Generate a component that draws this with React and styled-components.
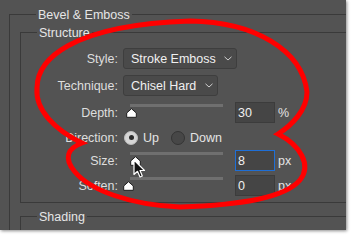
import styled, { createGlobalStyle } from 'styled-components';

const GlobalStyle = createGlobalStyle`
  body {
    margin: 0;
    font-family: "Liberation Sans", Arial, sans-serif;
  }
`;

const Page = styled.div`
  position: relative;
  width: 355px;
  height: 240px;
  background: #ffffff;
  overflow: hidden;
`;

const Dialog = styled.div`
  width: 346px;
  height: 230px;
  box-sizing: border-box;
  padding: 6px 0 0 9px;
  background: #535353;
  box-shadow: 1px 1px 3px rgba(0, 0, 0, 0.45);
  overflow: hidden;
  color: #e4e4e4;
  font-size: 12.5px;
`;

const Group = styled.fieldset`
  margin: 0 0 ${({ $mb }) => $mb || 0}px 0;
  padding: ${({ $pad }) => $pad};
  width: 380px;
  min-width: 0;
  box-sizing: border-box;
  border: 1px solid #3a3a3a;
`;

// text sits a pixel under the group line, as in Photoshop
const Legend = styled.legend`
  margin-left: ${({ $ml }) => $ml}px;
  padding: 2px 2px 0;
  font-size: 12.5px;
  line-height: 14px;
  color: #e6e6e6;
`;

const Row = styled.div`
  display: flex;
  align-items: center;
  height: 21px;
  margin-top: ${({ $mt }) => $mt || 0}px;
`;

const Label = styled.div`
  flex: none;
  width: 97px;
  margin-right: 5px;
  text-align: right;
  color: #dedede;
`;

const Select = styled.div`
  display: flex;
  align-items: center;
  justify-content: space-between;
  width: ${({ $w }) => $w}px;
  height: 21px;
  box-sizing: border-box;
  padding: 0 4px 0 7px;
  border: 1px solid #3e3e3e;
  border-radius: 3px;
  background: #4a4a4a;
  color: #f0f0f0;
`;

const Slider = styled.div`
  position: relative;
  flex: none;
  width: 100px;
  height: 21px;
  margin-right: 12px;
`;

const Track = styled.div`
  position: absolute;
  left: 7px;
  right: 0;
  top: 2px;
  height: 3px;
  background: #6f6f6f;
`;

const Thumb = styled.svg`
  position: absolute;
  top: 6px;
  width: 11px;
  height: 10px;
`;

const NumInput = styled.div`
  flex: none;
  display: flex;
  align-items: center;
  width: 40px;
  height: 21px;
  box-sizing: border-box;
  padding-left: 2px;
  border: 1px solid ${({ $focus }) => ($focus ? '#1f6fd6' : '#3c3c3c')};
  background: #454545;
  color: #f0f0f0;
`;

const Unit = styled.span`
  margin-left: 3px;
  color: #e4e4e4;
`;

const RadioGroup = styled.div`
  display: flex;
  align-items: center;
  margin-left: 1px;
`;

const Radio = styled.span`
  display: inline-flex;
  align-items: center;
  justify-content: center;
  width: 14px;
  height: 14px;
  box-sizing: border-box;
  border-radius: 50%;
  border: 1px solid ${({ $on }) => ($on ? '#bdbdbd' : '#343434')};
  background: ${({ $on }) => ($on ? '#d6d6d6' : '#474747')};
  margin-right: 5px;

  &::after {
    content: '';
    display: ${({ $on }) => ($on ? 'block' : 'none')};
    width: 5px;
    height: 5px;
    border-radius: 50%;
    background: #2b2b2b;
  }
`;

const RadioText = styled.span`
  margin-right: 12px;
  color: #e4e4e4;
`;

const Overlay = styled.svg`
  position: absolute;
  left: 0;
  top: 0;
  pointer-events: none;
`;

function Chevron() {
  return (
    <svg width="8" height="5" viewBox="0 0 8 5">
      <path d="M0.5 0.8 L4 4 L7.5 0.8" fill="none" stroke="#cfcfcf" strokeWidth="1" />
    </svg>
  );
}

function SliderField({ thumb }) {
  return (
    <Slider>
      <Track />
      <Thumb viewBox="0 0 11 10" style={{ left: thumb - 5.5 }}>
        <path
          d="M5.5 0.7 L10.3 5 L10.3 9.3 L0.7 9.3 L0.7 5 Z"
          fill="#ffffff"
          stroke="#1e1e1e"
          strokeWidth="1"
          strokeLinejoin="round"
        />
      </Thumb>
    </Slider>
  );
}

const sliders = [
  { label: 'Depth:', thumb: 8, value: '30', unit: '%', mt: 6 },
  { label: 'Size:', thumb: 12, value: '8', unit: 'px', mt: 2, focus: true },
  { label: 'Soften:', thumb: 5, value: '0', unit: 'px', mt: 4 },
];

export default function App() {
  const [depth, size, soften] = sliders;
  const renderSlider = (s) => (
    <Row $mt={s.mt} key={s.label}>
      <Label>{s.label}</Label>
      <SliderField thumb={s.thumb} />
      <NumInput $focus={s.focus}>{s.value}</NumInput>
      <Unit>{s.unit}</Unit>
    </Row>
  );

  return (
    <Page>
      <GlobalStyle />
      <Dialog>
        <Group $pad="2px 0 0 10px">
          <Legend $ml={16}>Bevel &amp; Emboss</Legend>
          <Group $pad="8px 0 6px 0" $mb={5}>
            <Legend $ml={16}>Structure</Legend>
            <Row>
              <Label>Style:</Label>
              <Select $w={114}>
                Stroke Emboss
                <Chevron />
              </Select>
            </Row>
            <Row $mt={6}>
              <Label>Technique:</Label>
              <Select $w={95}>
                Chisel Hard
                <Chevron />
              </Select>
            </Row>
            {renderSlider(depth)}
            <Row $mt={4}>
              <Label>Direction:</Label>
              <RadioGroup>
                <Radio $on />
                <RadioText>Up</RadioText>
                <Radio />
                <RadioText>Down</RadioText>
              </RadioGroup>
            </Row>
            {renderSlider(size)}
            {renderSlider(soften)}
          </Group>
          <Group $pad="8px 0 6px 0">
            <Legend $ml={16}>Shading</Legend>
          </Group>
        </Group>
      </Dialog>

      <Overlay width="355" height="240" viewBox="0 0 355 240">
        <path
          d="M82 143 C55 130, 35 110, 37 88 C37 60, 70 25, 190 21 C255 22, 302 50, 307 92 C307 110, 292 125, 278 134 C300 145, 312 165, 300 180 C285 198, 240 205, 180 207 C130 205, 90 190, 75 172 C63 158, 68 148, 82 143 Z"
          fill="none"
          stroke="#ff0000"
          strokeWidth="5"
          strokeLinejoin="miter"
        />
      </Overlay>
      <Overlay width="13" height="20" viewBox="0 0 13 20" style={{ left: 133, top: 159 }}>
        <path
          d="M1 1 L1 15.5 L4.5 12.3 L7 18 L9.3 17 L7 11.5 L11.5 11.5 Z"
          fill="#111111"
          stroke="#ffffff"
          strokeWidth="1.2"
          strokeLinejoin="round"
        />
      </Overlay>
    </Page>
  );
}
